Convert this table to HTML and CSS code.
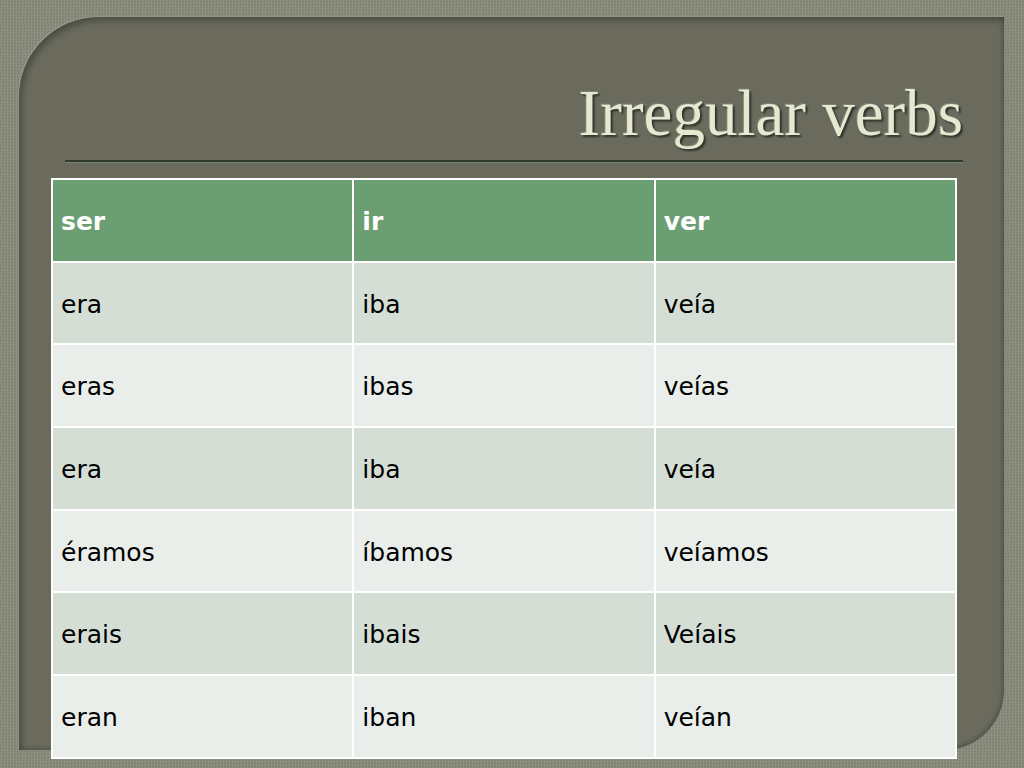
FILE: index.html
```html
<!DOCTYPE html>
<html lang="es">
<head>
<meta charset="utf-8">
<title>Irregular verbs</title>
<link rel="stylesheet" href="styles.css">
</head>
<body>
<div class="slide">
  <div class="panel">
    <h1 class="title">Irregular verbs</h1>
    <div class="rule"></div>
    <table class="verbs">
      <thead>
        <tr><th>ser</th><th>ir</th><th>ver</th></tr>
      </thead>
      <tbody>
        <tr><td>era</td><td>iba</td><td>veía</td></tr>
        <tr><td>eras</td><td>ibas</td><td>veías</td></tr>
        <tr><td>era</td><td>iba</td><td>veía</td></tr>
        <tr><td>éramos</td><td>íbamos</td><td>veíamos</td></tr>
        <tr><td>erais</td><td>ibais</td><td>Veíais</td></tr>
        <tr><td>eran</td><td>iban</td><td>veían</td></tr>
      </tbody>
    </table>
  </div>
</div>
</body>
</html>
```

FILE: styles.css
```css
html, body {
  margin: 0;
  padding: 0;
}

body {
  width: 1024px;
  height: 768px;
  overflow: hidden;
}

.slide {
  width: 1024px;
  height: 768px;
  padding: 17px 20px 0 19px;
  box-sizing: border-box;
  background: repeating-conic-gradient(#8f9283 0 25%, #7e8071 0 50%) 0 0 / 3px 3px;
}

.panel {
  width: 985px;
  height: 733px;
  box-sizing: border-box;
  padding: 64px 41px 0 32px;
  background: #6a6b5d;
  border-radius: 80px 0 60px 0;
  box-shadow: inset 3px 4px 6px rgba(0, 0, 0, 0.28),
              inset -2px -2px 4px rgba(0, 0, 0, 0.18),
              -1px -1px 0 rgba(255, 255, 255, 0.12);
  display: flex;
  flex-direction: column;
}

.panel > * {
  flex-shrink: 0;
}

.title {
  margin: 0;
  font-family: "Liberation Serif", "Times New Roman", serif;
  font-weight: normal;
  font-size: 65px;
  line-height: 64px;
  text-align: right;
  color: #e6e8cf;
  text-shadow: 2px 2px 2px rgba(0, 0, 0, 0.55), -1px -1px 0 rgba(255, 255, 255, 0.15);
}

.rule {
  margin: 15px 0 0 14px;
  height: 2px;
  background: #2f3b2c;
  box-shadow: 0 1px 0 rgba(140, 160, 130, 0.45);
}

.verbs {
  margin-top: 16px;
  width: 906px;
  table-layout: fixed;
  border-collapse: separate;
  border-spacing: 2px;
  background: #ffffff;
  font-family: "DejaVu Sans", Verdana, sans-serif;
  font-size: 25px;
  color: #000;
}

.verbs th,
.verbs td {
  height: 80.7px;
  box-sizing: border-box;
  padding: 2px 0 0 8px;
  text-align: left;
  vertical-align: middle;
}

.verbs th {
  background: #6c9e74;
  color: #ffffff;
  font-weight: bold;
}

.verbs tbody tr:nth-child(odd) td {
  background: #d4ded5;
}

.verbs tbody tr:nth-child(even) td {
  background: #e9eeea;
}
```
